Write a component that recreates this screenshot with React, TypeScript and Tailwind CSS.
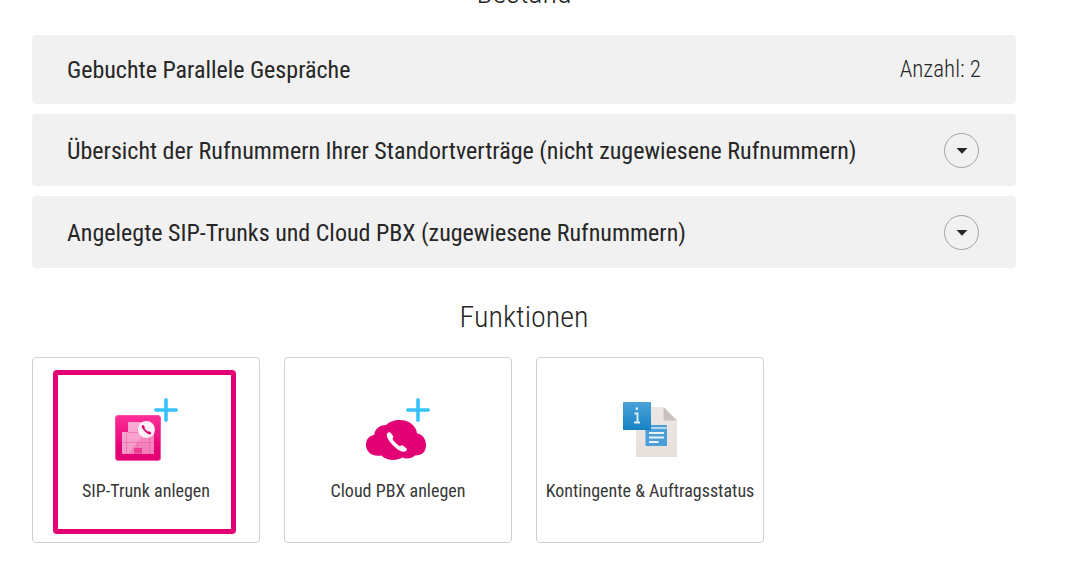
import type { ReactNode } from "react";

const HANDSET =
  "M1 2.2C1.6 0.9 3 0.3 4.2 1.2L6.9 4.4C7.7 5.5 7.2 6.7 6.3 7.4C7.2 9.4 11.8 14.2 14.2 15.2C15 14.2 16.2 13.9 17.3 14.7L20.6 17.3C21.4 18.2 21.1 19.4 20.2 20.1C18.6 21.3 16.2 21 13.8 19.6C8.4 16.4 3.4 10.8 1.2 6.4C0.5 4.8 0.4 3.5 1 2.2Z";

function Plus() {
  return (
    <path d="M52 1.8V22.2M41.8 12H62.2" stroke="#37c3fa" strokeWidth="3.6" strokeLinecap="round" />
  );
}

function SipTrunkIcon() {
  return (
    <svg viewBox="0 0 64 64" className="size-16" fill="none" aria-hidden="true">
      <defs>
        <linearGradient id="sip-tile" x1="0" y1="17" x2="0" y2="63" gradientUnits="userSpaceOnUse">
          <stop offset="0" stopColor="#fd2f98" />
          <stop offset="0.75" stopColor="#e20074" />
          <stop offset="1" stopColor="#e20074" />
        </linearGradient>
        <linearGradient id="sip-edge" x1="0" y1="17" x2="0" y2="63" gradientUnits="userSpaceOnUse">
          <stop offset="0" stopColor="#fb4ca6" />
          <stop offset="1" stopColor="#ee5aa5" />
        </linearGradient>
      </defs>
      <rect x="1.5" y="17.5" width="45" height="45" rx="2.5" fill="url(#sip-tile)" stroke="url(#sip-edge)" />
      <path d="M14 24H30V34H40V56H8V34H14Z" fill="#fff" fillOpacity="0.5" />
      <path d="M8 34H14V24H30V34H32L14 56H8Z" fill="#fff" fillOpacity="0.22" />
      <path d="M12.5 34V56M35.5 34V56M14 34.5H30M8 44.5H40M23.5 44V52" stroke="#ec3f97" strokeOpacity="0.4" />
      <rect x="20" y="50" width="8" height="5.5" fill="#ea3a92" />
      <circle cx="32.5" cy="31.5" r="8.5" fill="#fff2f8" />
      <g transform="translate(27.4 26.6) scale(0.47)">
        <path d={HANDSET} fill="#d9006f" />
      </g>
      <Plus />
    </svg>
  );
}

function CloudIcon() {
  return (
    <svg viewBox="0 0 64 64" className="size-16" fill="none" aria-hidden="true">
      <path
        d="M20 27C23 24 28 22 34 22C43 22 50.5 28 51 35.5C56 35.8 60 41 60 47C60 54 56 57.5 49 57.5C46 60.5 40 61.2 36.5 59.5C30 63.5 20 62.5 15.5 57.5C6 59 0 54 0 47C0 41 3.5 37.5 8.2 37C9 30 14.5 27 20 27Z"
        fill="#e20074"
      />
      <g transform="translate(20.2 33.4) scale(0.98)">
        <path d={HANDSET} fill="#fff" />
      </g>
      <Plus />
    </svg>
  );
}

function StatusIcon() {
  return (
    <svg viewBox="0 0 64 64" className="size-16" fill="none" aria-hidden="true">
      <defs>
        <linearGradient id="status-paper" x1="0" y1="9" x2="0" y2="59" gradientUnits="userSpaceOnUse">
          <stop offset="0" stopColor="#ece7e4" />
          <stop offset="1" stopColor="#e8dfdb" />
        </linearGradient>
        <linearGradient id="status-info" x1="0" y1="4" x2="0" y2="32" gradientUnits="userSpaceOnUse">
          <stop offset="0" stopColor="#4ba2d8" />
          <stop offset="1" stopColor="#1682c3" />
        </linearGradient>
      </defs>
      <path d="M18 9H45.5L59 22.5V59H18Z" fill="url(#status-paper)" />
      <path d="M45.5 9L59 22.5H45.5Z" fill="#c9c1bf" />
      <rect x="27.5" y="27" width="21.5" height="21" rx="0.5" fill="#4a9fd8" />
      <path d="M28 30H49" stroke="#d7e6ef" strokeWidth="1.5" />
      <path d="M31 35H46M31 39.5H46M31 44H40.5" stroke="#eaf3f9" strokeWidth="2" />
      <rect x="5" y="4" width="28" height="28" rx="0.5" fill="url(#status-info)" />
      <path d="M16.5 15.5H19.5V24.5M16 24.5H22" stroke="#e3f1fa" strokeWidth="1.8" />
      <rect x="17.6" y="9.5" width="2.4" height="2.4" fill="#e3f1fa" />
    </svg>
  );
}

function SectionTitle({ children, className = "" }: { children: ReactNode; className?: string }) {
  return <h2 className={`text-center text-[30px] leading-9 font-light ${className}`}>{children}</h2>;
}

function AccordionRow({ title }: { title: string }) {
  return (
    <li className="flex items-center justify-between gap-4 rounded bg-[#f1f1f1] pt-[19px] pr-[37px] pb-[18px] pl-[35px]">
      <span className="text-2xl">{title}</span>
      <button
        type="button"
        aria-label={`${title} öffnen`}
        className="flex size-[35px] shrink-0 items-center justify-center rounded-full border border-[#a4a4a4]"
      >
        <svg viewBox="0 0 12 6" className="h-1.5 w-3" aria-hidden="true">
          <path d="M0.5 0H11.5L6 5.8Z" fill="#262626" />
        </svg>
      </button>
    </li>
  );
}

function FunctionCard({
  label,
  icon,
  highlighted = false,
}: {
  label: string;
  icon: ReactNode;
  highlighted?: boolean;
}) {
  return (
    <a
      href="#"
      className="relative flex flex-col items-center rounded border border-[#d0d0d0] bg-white pt-10 pb-[39px] text-center"
    >
      {icon}
      <span className="mt-[17px] text-lg leading-6 whitespace-nowrap text-[#383838]">{label}</span>
      {highlighted && (
        <span className="absolute top-3 right-[23px] bottom-2 left-5 rounded border-[5px] border-[#e20074]" />
      )}
    </a>
  );
}

export default function App() {
  return (
    <main className="overflow-hidden bg-white pr-[61px] pb-10 pl-8 font-['Roboto_Condensed','Roboto',sans-serif] text-[#262626]">
      <section>
        <SectionTitle className="-mt-[25px]">Bestand</SectionTitle>
        <ul className="mt-6 flex flex-col gap-2.5">
          <li className="flex items-center justify-between rounded bg-[#f1f1f1] px-[35px] pt-[19px] pb-[18px]">
            <span className="text-2xl">Gebuchte Parallele Gespräche</span>
            <span className="text-[23px] leading-8 font-light">Anzahl: 2</span>
          </li>
          <AccordionRow title="Übersicht der Rufnummern Ihrer Standortverträge (nicht zugewiesene Rufnummern)" />
          <AccordionRow title="Angelegte SIP-Trunks und Cloud PBX (zugewiesene Rufnummern)" />
        </ul>
      </section>
      <section>
        <SectionTitle className="mt-[31px]">Funktionen</SectionTitle>
        <div className="mt-[22px] grid grid-cols-4 gap-6">
          <FunctionCard label="SIP-Trunk anlegen" icon={<SipTrunkIcon />} highlighted />
          <FunctionCard label="Cloud PBX anlegen" icon={<CloudIcon />} />
          <FunctionCard label="Kontingente &amp; Auftragsstatus" icon={<StatusIcon />} />
        </div>
      </section>
    </main>
  );
}
